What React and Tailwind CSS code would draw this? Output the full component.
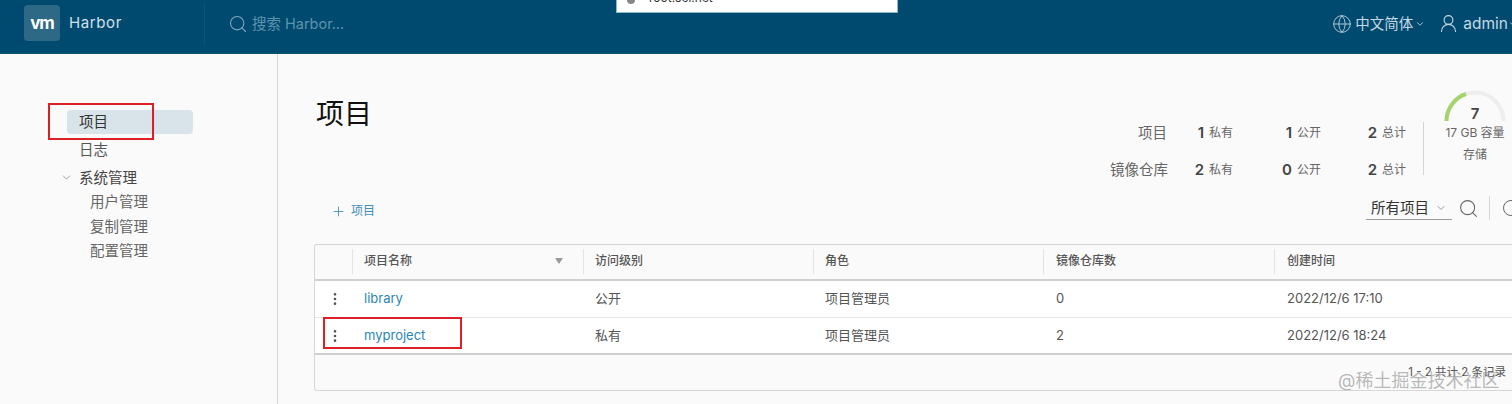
import React from 'react';
import { Search, Globe, ChevronDown, UserRound, Plus, RotateCw, EllipsisVertical } from 'lucide-react';

const font = "font-['Inter','Noto_Sans_CJK_SC',sans-serif]";

const columns = [
  { name: '项目名称', width: 'w-[231px]', filter: true },
  { name: '访问级别', width: 'w-[230px]' },
  { name: '角色', width: 'w-[230px]' },
  { name: '镜像仓库数', width: 'w-[231px]', pad: 'pl-3' },
  { name: '创建时间', width: 'flex-1', pad: 'pl-3' },
];

const rows = [
  { name: 'library', access: '公开', role: '项目管理员', repos: '0', created: '2022/12/6 17:10' },
  { name: 'myproject', access: '私有', role: '项目管理员', repos: '2', created: '2022/12/6 18:24' },
];

function Stat({ value, label, width }) {
  return (
    <div className={`flex shrink-0 items-center justify-end gap-[5px] ${width}`}>
      <span className="text-[15px] font-semibold text-[#444]">{value}</span>
      <span className="text-[12px] text-[#666]">{label}</span>
    </div>
  );
}

function Header() {
  return (
    <header className="flex h-[54px] items-center border-b border-[#0a5578] bg-[#004a70] pb-[6px] text-[#c5d9e4]">
      <div className="mb-[1px] ml-6 flex h-9 w-9 items-center justify-center rounded-sm bg-[#2d6884]">
        <span className="text-[17px] leading-none font-bold tracking-[-1px] text-white">vm</span>
      </div>
      <span className="ml-[9px] text-[15px] tracking-[0.6px] text-[#d3e1e9]">Harbor</span>
      <div className="ml-[82px] h-10 w-px bg-[#0f5577]" />
      <Search className="ml-[23px] shrink-0 text-[#7fa9bf]" size={20} strokeWidth={1.3} />
      <span className="ml-[4px] text-[14.5px] text-[#5e93ae]">搜索 Harbor...</span>
      <div className="ml-auto flex items-center">
        <Globe className="shrink-0 text-[#a9c6d5]" size={20} strokeWidth={1.2} />
        <span className="ml-[3px] text-[14.5px]">中文简体</span>
        <ChevronDown className="ml-[2px]" size={10} />
        <UserRound className="ml-[13px] shrink-0 text-[#c5d9e4]" size={21} strokeWidth={1.3} />
        <span className="ml-[4px] text-[15.5px]">admin</span>
        <ChevronDown className="mr-[-6px] shrink-0" size={10} />
      </div>
    </header>
  );
}

function Sidebar() {
  return (
    <aside className="relative w-[278px] shrink-0 border-r border-[#d5d5d5] pt-[56px] text-[14.5px] text-[#555]">
      <div className="ml-[67px] flex h-6 w-[126px] items-center rounded-sm bg-[#d9e4ea] pl-3 text-[#333]">项目</div>
      <div className="mt-[3px] ml-[79px] leading-[25px] text-[#555]">日志</div>
      <div className="mt-[3px] flex items-center leading-[25px] text-[#444]">
        <ChevronDown className="ml-[60px] text-[#888]" size={13} strokeWidth={1.4} />
        <span className="ml-[6px]">系统管理</span>
      </div>
      <div className="ml-[90px] leading-[24.5px] text-[#666]">
        <div>用户管理</div>
        <div>复制管理</div>
        <div>配置管理</div>
      </div>
      {/* annotation box */}
      <div className="absolute top-[49px] left-[48px] h-[37px] w-[106px] border-2 border-[#dd1f26]" />
    </aside>
  );
}

function Stats() {
  return (
    <div className="mr-[-14px] flex shrink-0">
      <div className="mt-[31px] flex w-[296px] flex-col">
        {[
          ['项目', '1', '1', '2'],
          ['镜像仓库', '2', '0', '2'],
        ].map(([label, priv, pub, total], i) => (
          <div key={label} className={`flex h-6 items-center ${i ? 'mt-[13px]' : ''}`}>
            <span className="w-[57px] shrink-0 text-right text-[14.5px] whitespace-nowrap text-[#666]">{label}</span>
            <Stat value={priv} label="私有" width="w-[66px]" />
            <Stat value={pub} label="公开" width="w-[88px]" />
            <Stat value={total} label="总计" width="w-[85px]" />
          </div>
        ))}
      </div>
      <div className="mt-[32px] ml-[17px] h-[53px] w-px bg-[#d5d5d5]" />
      <div className="flex w-[102px] flex-col items-center">
        <div className="relative h-[32px] w-[62px]">
          <svg viewBox="0 0 62 32" className="h-[32px] w-[62px]" fill="none" strokeWidth="4">
            <path d="M2.5 31A28.5 28.5 0 0 1 59.5 31" stroke="#eeeeee" />
            <path d="M2.5 31A28.5 28.5 0 0 1 22 4" stroke="#a5d46f" />
          </svg>
          <span className="absolute inset-x-0 top-[15px] text-center text-[15px] leading-[18px] font-semibold text-[#444]">7</span>
        </div>
        <span className="mt-[3px] text-[12px] leading-[16px] whitespace-nowrap text-[#666]">17 GB 容量</span>
        <span className="mt-[6px] text-[12px] leading-[16px] text-[#666]">存储</span>
      </div>
    </div>
  );
}

function Toolbar() {
  return (
    <div className="flex h-[34px] items-center">
      <Plus className="ml-[16px] text-[#3f8fb8]" size={15} strokeWidth={1.4} />
      <span className="ml-[5px] text-[12px] text-[#3f8fb8]">项目</span>
      <div className="mr-[-9px] mb-[6px] ml-auto flex items-center">
        <div className="flex h-[23px] w-[86px] items-center border-b border-[#9a9a9a] pl-[5px] text-[14.5px] text-[#333]">
          所有项目
          <ChevronDown className="ml-[6px] shrink-0 text-[#999]" size={12} />
        </div>
        <Search className="ml-[6px] shrink-0 text-[#666]" size={21} strokeWidth={1.2} />
        <div className="ml-[10px] h-6 w-px bg-[#d5d5d5]" />
        <RotateCw className="ml-[11px] shrink-0 text-[#666]" size={20} strokeWidth={1.2} />
      </div>
    </div>
  );
}

function ProjectTable() {
  return (
    <div className="relative mt-[16px] mr-[-4px] ml-[-1px] rounded-l-[3px] border border-r-0 border-[#d7d7d7] bg-[#fafafa]">
      <div className="flex h-[36px] items-center border-b-2 border-[#d0d0d0] pb-[2px] text-[12px] font-medium text-[#555]">
        <div className="h-[25px] w-[38px] border-r border-[#e3e3e3]" />
        {columns.map((col, i) => (
          <div key={col.name} className={`flex h-[25px] items-center ${col.pad || 'pl-[11px]'} ${col.width} ${i < 4 ? 'border-r border-[#e3e3e3]' : ''}`}>
            {col.name}
            {col.filter && <span className="mr-5 ml-auto h-0 w-0 border-x-[4px] border-t-[6px] border-x-transparent border-t-[#999]" />}
          </div>
        ))}
      </div>
      {rows.map((row, i) => (
        <div key={row.name} className={`flex h-[36px] items-center bg-white text-[13px] text-[#555] ${i ? 'border-t border-[#e5e5e5]' : ''}`}>
          <div className="flex w-[38px] justify-center pl-[2px]">
            <EllipsisVertical className="text-[#555]" size={16} strokeWidth={2} />
          </div>
          <div className="w-[231px] pl-[11px] text-[#2a86b4]">{row.name}</div>
          <div className="w-[230px] pl-[11px]">{row.access}</div>
          <div className="w-[230px] pl-[11px]">{row.role}</div>
          <div className="w-[231px] pl-3">{row.repos}</div>
          <div className="flex-1 pl-3">{row.created}</div>
        </div>
      ))}
      <div className="h-[37px] border-t-2 border-[#d0d0d0]" />
    </div>
  );
}

export default function App() {
  return (
    <div className={`relative h-[404px] overflow-hidden bg-[#fafafa] ${font}`}>
      <Header />
      <div className="flex h-[350px]">
        <Sidebar />
        <main className="min-w-0 flex-1 pl-[37px]">
          <div className="flex h-[140px] items-start justify-between pt-[36px]">
            <h1 className="mt-[4px] ml-[1px] text-[28px] leading-[40px] text-[#111]">项目</h1>
            <Stats />
          </div>
          <Toolbar />
          <ProjectTable />
        </main>
      </div>

      {/* things lying over the page */}
      <div className="absolute top-0 left-[616px] flex h-[13px] w-[282px] items-end overflow-hidden border-r border-b border-l border-[#8fb6cb] bg-white pb-[8px] pl-[10px] text-[12px] leading-none text-[#333]">
        <span className="mr-[14px] h-2 w-2 shrink-0 rounded-full bg-[#888]" />
        root.sel.net
      </div>
      <div className="absolute top-[317px] left-[323px] h-[32px] w-[139px] border-2 border-[#dd1f26]" />
      <div className="absolute top-[364px] right-[6px] text-[11.5px] text-[#555]">1 - 2 共计 2 条记录</div>
      <div className="absolute top-[367px] left-[1338px] text-[18px] text-[#9a9a9a]/70">@稀土掘金技术社区</div>
    </div>
  );
}
